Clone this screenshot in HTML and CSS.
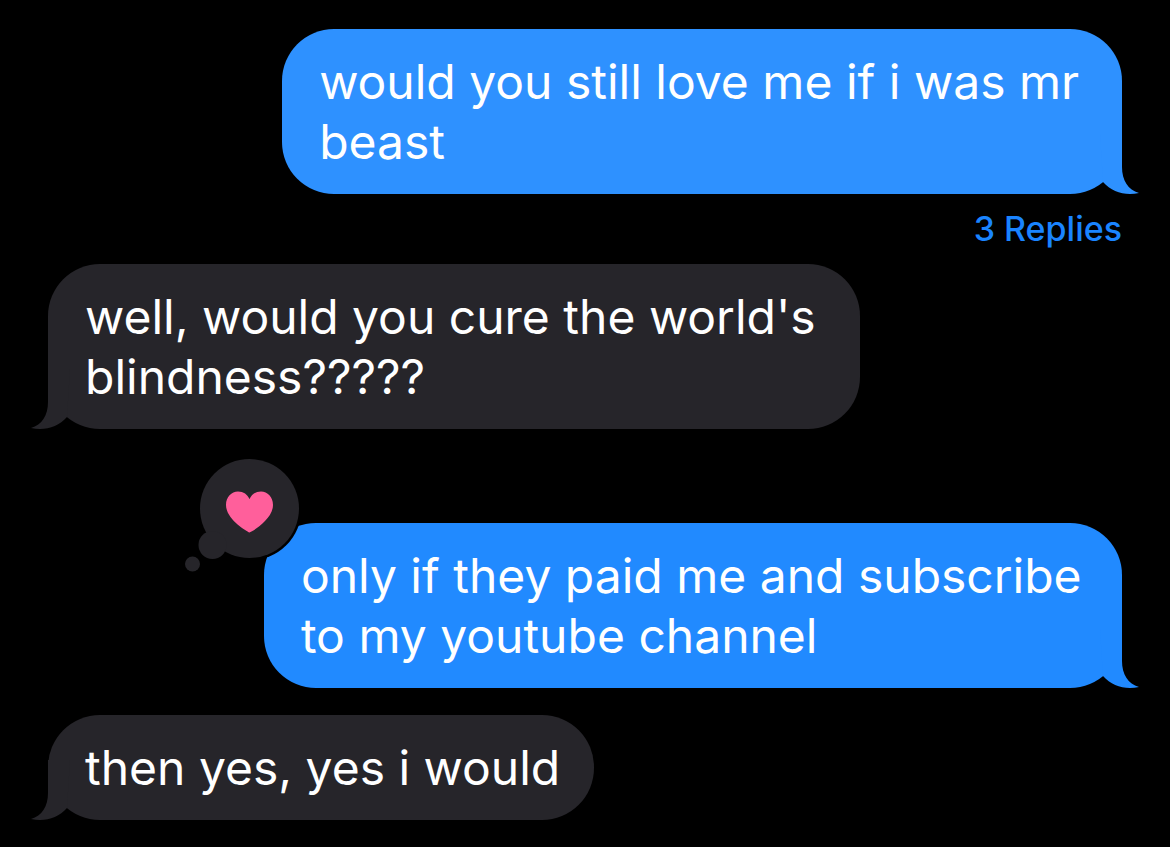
FILE: index.html
```html
<!DOCTYPE html>
<html lang="en">
<head>
  <meta charset="UTF-8">
  <meta name="viewport" content="width=device-width, initial-scale=1.0">
  <title>Messages</title>
  <link rel="stylesheet" href="styles.css">
</head>
<body>
  <main class="chat">
    <div class="message sent">
      <div class="bubble bubble-upper">
        <p>would you still love me if i was mr<br>beast</p>
        <svg class="tail" viewBox="0 0 40 60" aria-hidden="true"><path d="M22 0V33C22 46 28 56 39 59C25 62 12 58 3 48L0 0Z"/></svg>
      </div>
      <a class="replies" href="#replies">3 Replies</a>
    </div>

    <div class="message received">
      <div class="bubble bubble-medium">
        <p>well, would you cure the world's<br>blindness?????</p>
        <svg class="tail" viewBox="0 0 40 60" aria-hidden="true"><path d="M22 0V33C22 46 28 56 39 59C25 62 12 58 3 48L0 0Z"/></svg>
      </div>
    </div>

    <div class="message sent reacted">
      <div class="bubble bubble-wide">
        <p>only if they paid me and subscribe<br>to my youtube channel</p>
        <svg class="tail" viewBox="0 0 40 60" aria-hidden="true"><path d="M22 0V33C22 46 28 56 39 59C25 62 12 58 3 48L0 0Z"/></svg>
        <svg class="reaction" viewBox="0 0 120 120" role="img" aria-label="Loved">
          <circle class="ring" cx="65.5" cy="52.5" r="52"/>
          <circle class="cloud" cx="65.5" cy="52.5" r="49.5"/>
          <circle class="cloud" cx="28.5" cy="89" r="14"/>
          <circle class="cloud" cx="8.5" cy="108" r="7.5"/>
          <path class="heart" d="M65.5 76.500C62 75 42 63 42 49C42 41 47.500 35.500 54 35.500C59.500 35.500 63.500 38.500 65.500 43C67.500 38.500 71.500 35.500 77 35.500C83.500 35.500 89 41 89 49C89 63 69 75 65.500 76.500Z"/>
        </svg>
      </div>
    </div>

    <div class="message received">
      <div class="bubble bubble-short">
        <p>then yes, yes i would</p>
        <svg class="tail" viewBox="0 0 40 60" aria-hidden="true"><path d="M22 0V33C22 46 28 56 39 59C25 62 12 58 3 48L0 0Z"/></svg>
      </div>
    </div>
  </main>
</body>
</html>
```

FILE: styles.css
```css
* { box-sizing: border-box; }
body { margin: 0; background: #000; color: #fff; font-family: Inter, "Liberation Sans", sans-serif; }
p { margin: 0; }

.chat { display: flex; flex-direction: column; padding: 29px 48px 27px; }
.message { display: flex; flex-direction: column; align-items: flex-start; margin-bottom: 27px; }
.message:last-child { margin-bottom: 0; }
.sent { align-items: flex-end; }
.reacted { margin-top: 67px; }

.bubble { position: relative; padding: 23px 0 22px 37px; border-radius: 52px; font-size: 48px; line-height: 60px; white-space: nowrap; background: #26252a; fill: #26252a; }
.sent .bubble { background: #218aff; fill: #218aff; }
.sent .bubble-upper { background: #2e91ff; fill: #2e91ff; }
.bubble-upper { width: 78.2%; }
.bubble-medium { width: 75.6%; }
.bubble-wide { width: 79.9%; }
.bubble-short { width: 50.8%; }

.tail { position: absolute; right: -18px; bottom: 0; width: 40px; height: 60px; }
.received .tail { right: auto; left: -18px; transform: scaleX(-1); }

.replies { margin: 15px 0 -12px; color: #1a84ff; font-size: 34px; font-weight: 500; line-height: 40px; text-decoration: none; }

.reaction { position: absolute; left: -80px; top: -67px; width: 120px; height: 120px; overflow: visible; }
.ring { fill: #000; }
.cloud { fill: #26252a; }
.heart { fill: #ff5f9b; }
```
